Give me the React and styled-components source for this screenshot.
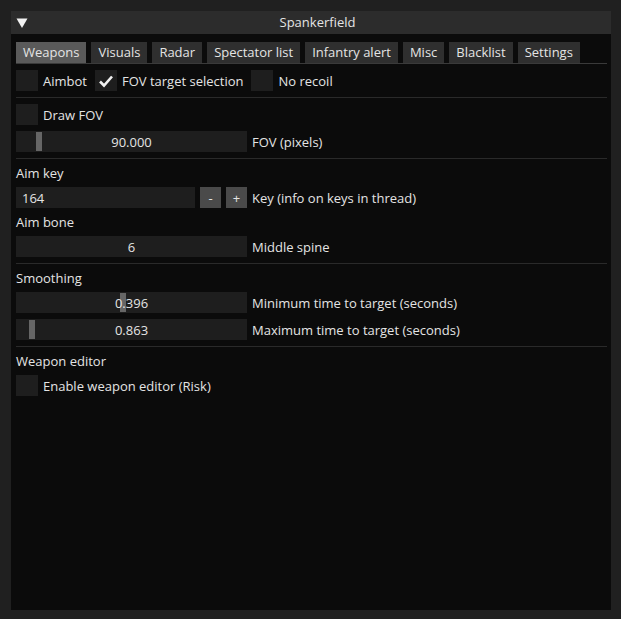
import styled, { createGlobalStyle } from "styled-components";

const Global = createGlobalStyle`
  html, body {
    margin: 0;
    padding: 0;
    background: #202020;
  }
  body {
    font-family: "Open Sans", "Liberation Sans", sans-serif;
    font-size: 13px;
    color: #e4e4e4;
  }
`;

const Page = styled.div`
  width: 621px;
  height: 619px;
  padding: 11px 10px 9px 11px;
  box-sizing: border-box;
  background: #202020;
`;

const Window = styled.div`
  height: 100%;
  display: flex;
  flex-direction: column;
  background: #0b0b0b;
`;

const TitleBar = styled.div`
  height: 23px;
  flex-shrink: 0;
  display: grid;
  grid-template-columns: 24px 1fr 24px;
  align-items: center;
  background: #2c2c2c;
  padding-left: 5px;
`;

const Collapse = styled.svg`
  width: 12px;
  height: 12px;
`;

const Title = styled.div`
  text-align: center;
  line-height: 23px;
  padding-left: 8px;
`;

const Body = styled.div`
  padding: 8px 4px 0 5px;
  display: flex;
  flex-direction: column;
  gap: 6px;
`;

const TabBar = styled.div`
  display: flex;
  gap: 5px;
  border-bottom: 1px solid #3a3a3a;
`;

const Tab = styled.div`
  height: 21px;
  line-height: 21px;
  padding: 0 7px;
  background: ${(p) => (p.$active ? "#5a5a5a" : "#2f2f2f")};
`;

const Row = styled.div`
  display: flex;
  align-items: center;
  height: 21px;
  gap: 5px;
`;

const Box = styled.div`
  width: 22px;
  height: 21px;
  background: #1e1e1e;
  display: flex;
  align-items: center;
  justify-content: center;
  flex-shrink: 0;
`;

const Check = styled.label`
  display: flex;
  align-items: center;
  gap: 5px;
  margin-right: 3px;
`;

const Sep = styled.div`
  height: 1px;
  background: #2a2a2a;
`;

const Heading = styled.div`
  height: 16px;
  line-height: 16px;
`;

const Frame = styled.div`
  position: relative;
  width: ${(p) => p.$w || 231}px;
  height: 21px;
  background: #1e1e1e;
  flex-shrink: 0;
  display: flex;
  align-items: center;
  justify-content: ${(p) => (p.$left ? "flex-start" : "center")};
  padding-left: ${(p) => (p.$left ? "6px" : "0")};
  box-sizing: border-box;
`;

const Grab = styled.div`
  position: absolute;
  top: 1px;
  bottom: 1px;
  width: 6px;
  background: #666;
`;

const Value = styled.span`
  position: relative;
`;

const StepButton = styled.div`
  width: 21px;
  height: 21px;
  background: #4a4a4a;
  display: flex;
  align-items: center;
  justify-content: center;
  flex-shrink: 0;
`;

const Label = styled.span`
  white-space: nowrap;
`;

function Checkbox({ label, checked }) {
  return (
    <Check>
      <Box>
        {checked && (
          <svg width="16" height="14" viewBox="0 0 16 14">
            <path d="M2 7.5 L6 11.5 L14 2.5" fill="none" stroke="#f0f0f0" strokeWidth="2.6" />
          </svg>
        )}
      </Box>
      <Label>{label}</Label>
    </Check>
  );
}

function Slider({ value, grab, label }) {
  return (
    <Row>
      <Frame>
        {grab !== undefined && <Grab style={{ left: grab }} />}
        <Value>{value}</Value>
      </Frame>
      <Label>{label}</Label>
    </Row>
  );
}

const tabs = ["Weapons", "Visuals", "Radar", "Spectator list", "Infantry alert", "Misc", "Blacklist", "Settings"];

export default function App() {
  return (
    <>
      <Global />
      <Page>
        <Window>
          <TitleBar>
            <Collapse viewBox="0 0 12 12">
              <path d="M0.5 1.5 L11.5 1.5 L6 11 Z" fill="#f2f2f2" />
            </Collapse>
            <Title>Spankerfield</Title>
            <span />
          </TitleBar>
          <Body>
            <TabBar>
              {tabs.map((t, i) => (
                <Tab key={t} $active={i === 0}>{t}</Tab>
              ))}
            </TabBar>
            <Row>
              <Checkbox label="Aimbot" />
              <Checkbox label="FOV target selection" checked />
              <Checkbox label="No recoil" />
            </Row>
            <Sep />
            <Row>
              <Checkbox label="Draw FOV" />
            </Row>
            <Slider value="90.000" grab={20} label="FOV (pixels)" />
            <Sep />
            <Heading>Aim key</Heading>
            <Row>
              <Frame $w={179} $left>164</Frame>
              <StepButton>-</StepButton>
              <StepButton>+</StepButton>
              <Label>Key (info on keys in thread)</Label>
            </Row>
            <Heading>Aim bone</Heading>
            <Slider value="6" label="Middle spine" />
            <Sep />
            <Heading>Smoothing</Heading>
            <Slider value="0.396" grab={104} label="Minimum time to target (seconds)" />
            <Slider value="0.863" grab={13} label="Maximum time to target (seconds)" />
            <Sep />
            <Heading>Weapon editor</Heading>
            <Row>
              <Checkbox label="Enable weapon editor (Risk)" />
            </Row>
          </Body>
        </Window>
      </Page>
    </>
  );
}
